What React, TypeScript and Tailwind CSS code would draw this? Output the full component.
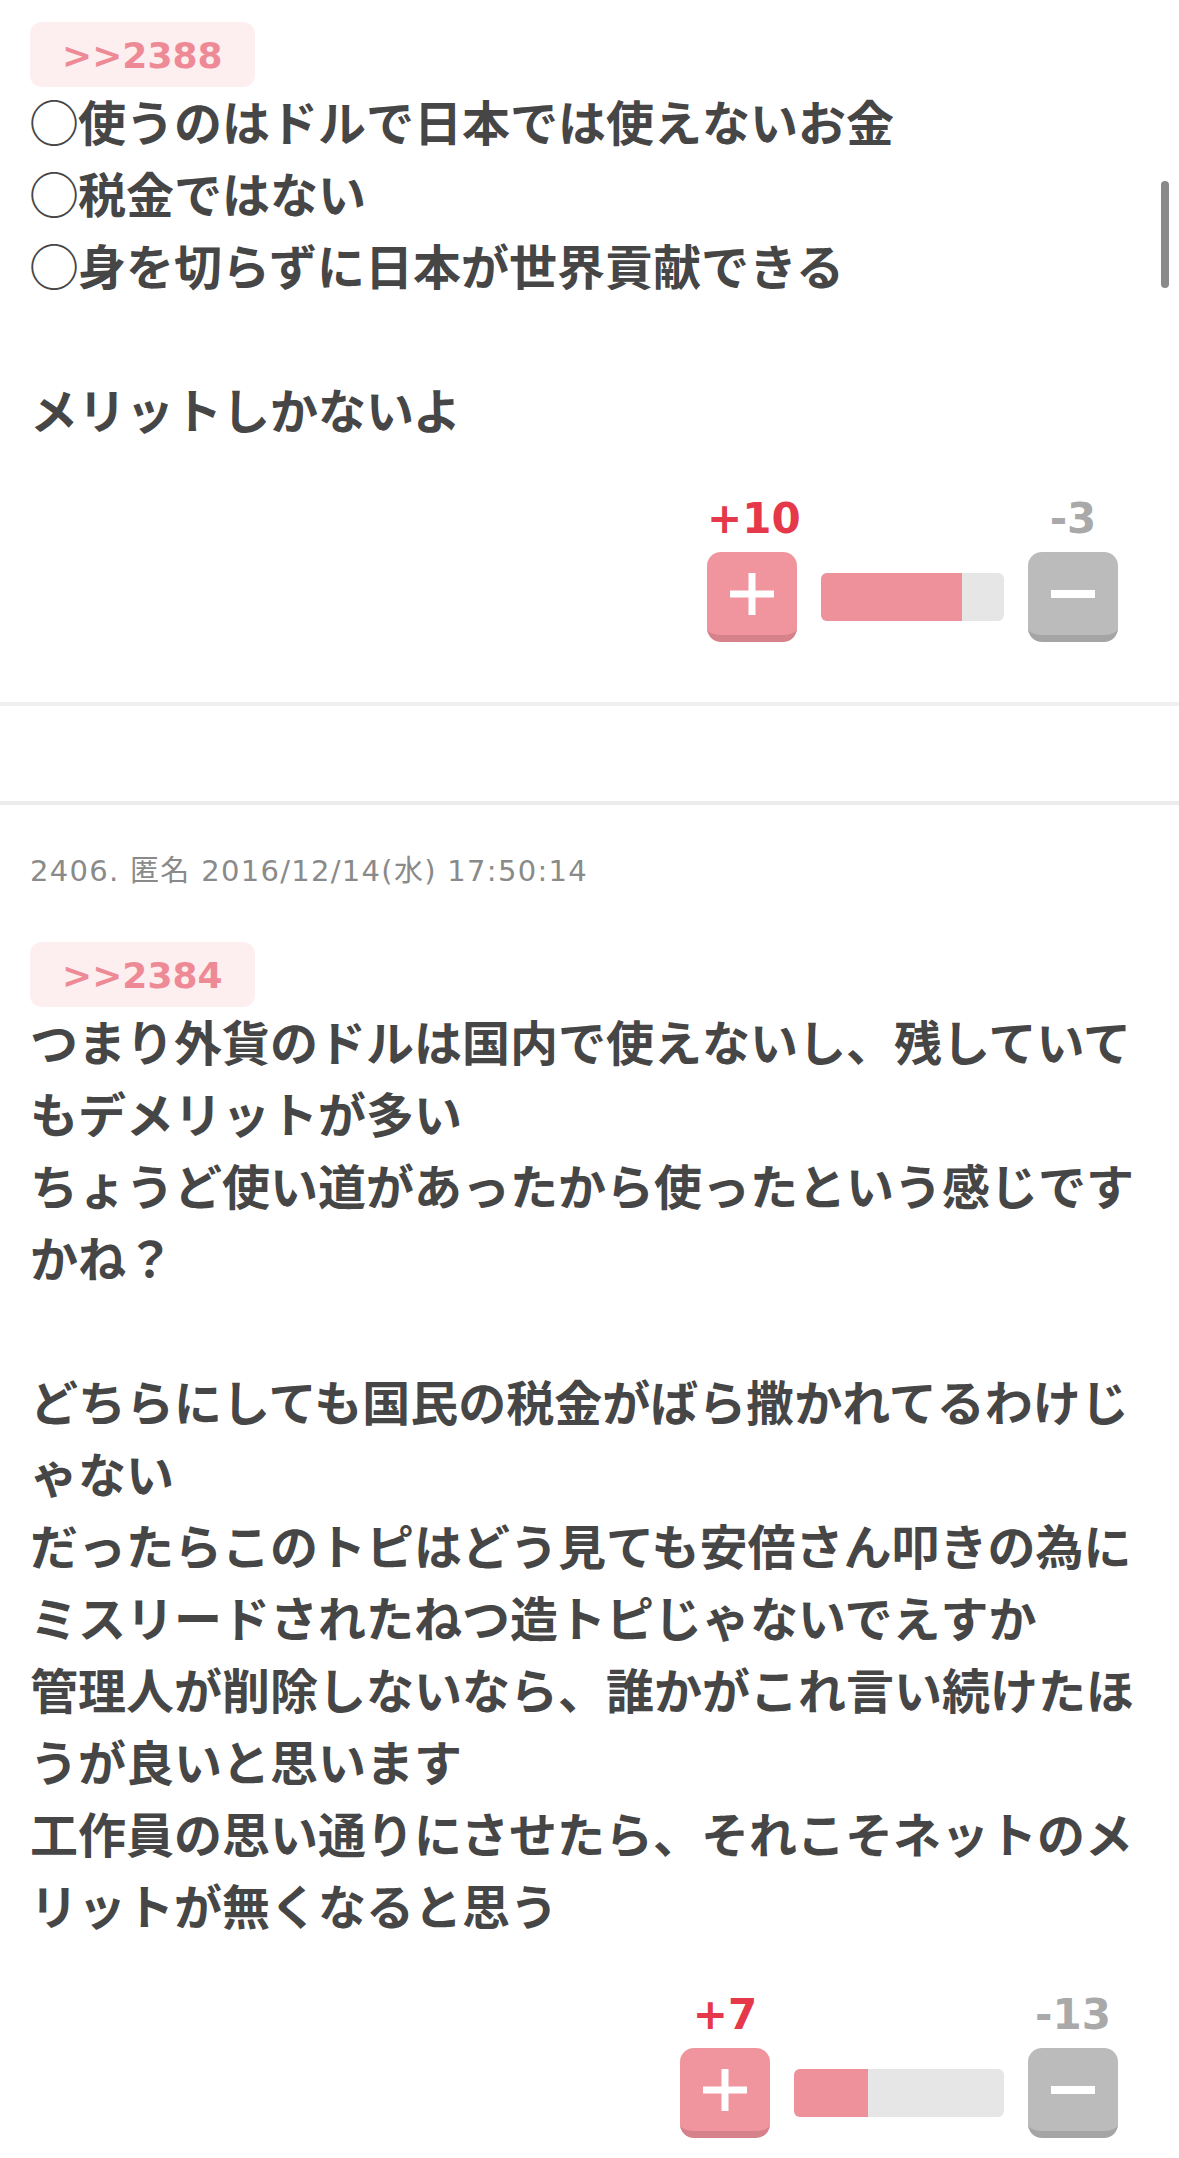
import React from 'react';

interface Post {
    header?: string;
    anchor: string;
    body: string;
    plus: number;
    minus: number;
    barWidth: number;
}

const posts: Post[] = [
    {
        anchor: '2388',
        body: '◯使うのはドルで日本では使えないお金\n◯税金ではない\n◯身を切らずに日本が世界貢献できる\n\nメリットしかないよ',
        plus: 10,
        minus: 3,
        barWidth: 183,
    },
    {
        header: '2406. 匿名 2016/12/14(水) 17:50:14',
        anchor: '2384',
        body: 'つまり外貨のドルは国内で使えないし、残していてもデメリットが多い\nちょうど使い道があったから使ったという感じですかね？\n\nどちらにしても国民の税金がばら撒かれてるわけじゃない\nだったらこのトピはどう見ても安倍さん叩きの為に\nミスリードされたねつ造トピじゃないでえすか\n管理人が削除しないなら、誰かがこれ言い続けたほうが良いと思います\n工作員の思い通りにさせたら、それこそネットのメリットが無くなると思う',
        plus: 7,
        minus: 13,
        barWidth: 210,
    },
];

const PlusIcon = () => (
    <svg width="44" height="44" viewBox="0 0 44 44">
        <rect x="0" y="18.5" width="44" height="7" fill="#fff" />
        <rect x="18.5" y="1" width="7" height="42" fill="#fff" />
    </svg>
);

const MinusIcon = () => (
    <svg width="44" height="8" viewBox="0 0 44 8">
        <rect x="0" y="0" width="44" height="8" fill="#fff" />
    </svg>
);

const Votes: React.FC<{ plus: number; minus: number; barWidth: number }> = ({ plus, minus, barWidth }) => {
    const ratio = (plus / (plus + minus)) * 100;

    return (
        <div className="mt-[50px] mr-[31px] flex justify-end">
            <div className="grid grid-cols-[90px_auto_90px] gap-x-[24px] gap-y-[8px] items-center">
                <div className="text-center font-['DejaVu_Sans',sans-serif] font-bold text-[42px] leading-[50px] text-[#e5394b]">
                    +{plus}
                </div>
                <div />
                <div className="text-center font-['DejaVu_Sans',sans-serif] font-bold text-[42px] leading-[50px] text-[#a9a9a9] whitespace-nowrap">
                    -{minus}
                </div>

                <div className="w-[90px] h-[90px] rounded-[14px] bg-[#f0959e] border-b-[7px] border-[#d6828b] flex items-center justify-center">
                    <PlusIcon />
                </div>
                <div className="h-[48px] rounded-[6px] bg-[#e6e6e6] overflow-hidden flex" style={{ width: barWidth }}>
                    <div className="h-full bg-[#ef919b]" style={{ width: `${ratio}%` }} />
                </div>
                <div className="w-[90px] h-[90px] rounded-[14px] bg-[#bbbbbb] border-b-[7px] border-[#a5a5a5] flex items-center justify-center">
                    <MinusIcon />
                </div>
            </div>
        </div>
    );
};

const PostItem: React.FC<{ post: Post; first?: boolean }> = ({ post, first }) => (
    <div className={`px-[30px] pb-[60px] ${first ? 'pt-[22px]' : 'pt-[46px]'}`}>
        {post.header && (
            <div className="mb-[51px] font-['DejaVu_Sans','Noto_Sans_CJK_JP',sans-serif] text-[29px] leading-[40px] tracking-[1.3px] text-[#8a8a8a]">
                {post.header}
            </div>
        )}
        <div className="inline-block h-[65px] px-[32px] rounded-[12px] bg-[#fdeef0] font-['DejaVu_Sans',sans-serif] font-bold text-[36px] leading-[68px] text-[#ee8a96]">
            &gt;&gt;{post.anchor}
        </div>
        <div className="-mt-[3px] whitespace-pre-wrap break-all font-['Noto_Sans_CJK_JP',sans-serif] font-bold text-[48px] leading-[72px] text-[#464646]">
            {post.body}
        </div>
        <Votes plus={post.plus} minus={post.minus} barWidth={post.barWidth} />
    </div>
);

export default function App() {
    return (
        <div className="relative w-[1179px] h-[2158px] overflow-hidden bg-white">
            <PostItem post={posts[0]} first />

            <div className="h-[4px] bg-[#efefef]" />
            <div className="h-[95px] bg-white" />
            <div className="h-[4px] bg-[#ececec]" />

            <PostItem post={posts[1]} />

            {/* scroll indicator */}
            <div className="absolute top-[181px] right-[10px] w-[8px] h-[107px] rounded-full bg-[#8a8a8a]" />
        </div>
    );
}
